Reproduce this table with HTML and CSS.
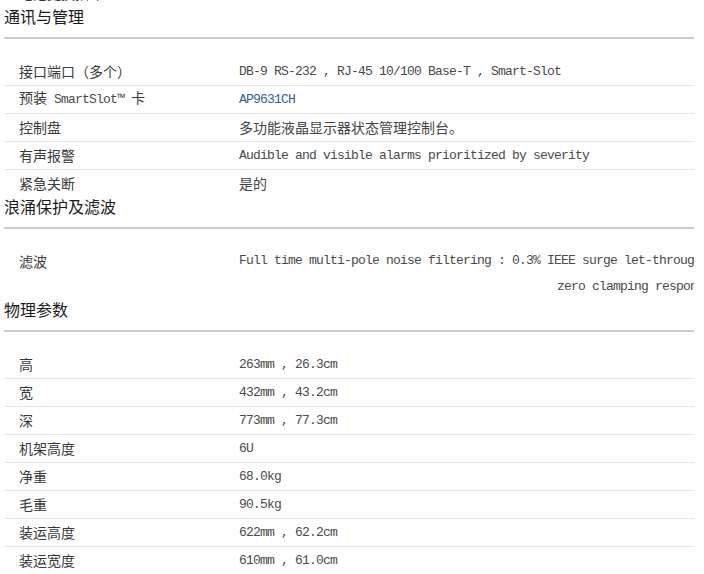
FILE: index.html
```html
<!DOCTYPE html>
<html lang="zh-CN">
<head>
<meta charset="utf-8">
<title>技术规格</title>
<link rel="stylesheet" href="styles.css">
</head>
<body>
<div class="page">
  <div class="row row-last prev">
    <div class="label">电池更换指令</div>
    <div class="value"></div>
  </div>

  <section class="group">
    <h3 class="group-title">通讯与管理</h3>
    <div class="rows">
      <div class="row">
        <div class="label">接口端口（多个）</div>
        <div class="value"><span class="mono">DB-9 RS-232 , RJ-45 10/100 Base-T , Smart-Slot</span></div>
      </div>
      <div class="row">
        <div class="label">预装<span class="mono"> SmartSlot™ </span>卡</div>
        <div class="value"><a class="mono link" href="#">AP9631CH</a></div>
      </div>
      <div class="row">
        <div class="label">控制盘</div>
        <div class="value">多功能液晶显示器状态管理控制台。</div>
      </div>
      <div class="row">
        <div class="label">有声报警</div>
        <div class="value"><span class="mono">Audible and visible alarms prioritized by severity</span></div>
      </div>
      <div class="row row-last">
        <div class="label">紧急关断</div>
        <div class="value">是的</div>
      </div>
    </div>
  </section>

  <section class="group">
    <h3 class="group-title">浪涌保护及滤波</h3>
    <div class="rows">
      <div class="row row-last row-tall">
        <div class="label label-top">滤波</div>
        <div class="value value-multi">
          <div class="line line-first"><span class="mono">Full time multi-pole noise filtering : 0.3% IEEE surge let-through ,</span></div>
          <div class="line line-second"><span class="mono">zero clamping response time , meets UL 1449</span></div>
        </div>
      </div>
    </div>
  </section>

  <section class="group">
    <h3 class="group-title">物理参数</h3>
    <div class="rows">
      <div class="row">
        <div class="label">高</div>
        <div class="value"><span class="mono">263mm , 26.3cm</span></div>
      </div>
      <div class="row">
        <div class="label">宽</div>
        <div class="value"><span class="mono">432mm , 43.2cm</span></div>
      </div>
      <div class="row">
        <div class="label">深</div>
        <div class="value"><span class="mono">773mm , 77.3cm</span></div>
      </div>
      <div class="row">
        <div class="label">机架高度</div>
        <div class="value"><span class="mono">6U</span></div>
      </div>
      <div class="row">
        <div class="label">净重</div>
        <div class="value"><span class="mono">68.0kg</span></div>
      </div>
      <div class="row">
        <div class="label">毛重</div>
        <div class="value"><span class="mono">90.5kg</span></div>
      </div>
      <div class="row">
        <div class="label">装运高度</div>
        <div class="value"><span class="mono">622mm , 62.2cm</span></div>
      </div>
      <div class="row">
        <div class="label">装运宽度</div>
        <div class="value"><span class="mono">610mm , 61.0cm</span></div>
      </div>
    </div>
  </section>
</div>
</body>
</html>
```

FILE: styles.css
```css
html, body {
  margin: 0;
  padding: 0;
  background: #ffffff;
  overflow: hidden;
}

body {
  font-family: "Noto Sans CJK SC", "Noto Sans", sans-serif;
  font-size: 14px;
  color: #333333;
}

.page {
  width: 690px;
  margin: -20px 0 0 4px;
  overflow: hidden;
}

.group-title {
  margin: 0;
  padding: 0 0 13px 0;
  font-size: 16px;
  line-height: 16px;
  font-weight: normal;
  color: #1a1a1a;
  border-bottom: 2px solid #cccccc;
}

.rows {
  margin-top: 19px;
}

.row {
  display: flex;
  align-items: center;
  height: 28px;
  padding-bottom: 2px;
  box-sizing: border-box;
  border-bottom: 1px solid #e6e6e6;
}

.row-last {
  border-bottom: none;
}

.row-tall {
  height: 53px;
  padding-bottom: 0;
  align-items: flex-start;
}

.label {
  flex: 0 0 220px;
  padding-left: 15px;
  line-height: 16px;
  color: #3a3a3a;
  white-space: pre;
}

.label-top {
  padding-top: 5px;
}

.value {
  flex: 1 1 auto;
  min-width: 0;
  line-height: 16px;
  color: #444444;
  white-space: nowrap;
}

.value-multi {
  display: flex;
  flex-direction: column;
}

.line {
  display: flex;
  align-items: center;
  white-space: nowrap;
}

.line-first {
  height: 26px;
}

.line-second {
  height: 26px;
  padding-left: 318px;
}

.mono {
  font-family: "Liberation Mono", "DejaVu Sans Mono", monospace;
  font-size: 13px;
  letter-spacing: -0.8px;
  color: #4a4a4a;
}

.link {
  color: #2f6199;
  text-decoration: none;
}
```
